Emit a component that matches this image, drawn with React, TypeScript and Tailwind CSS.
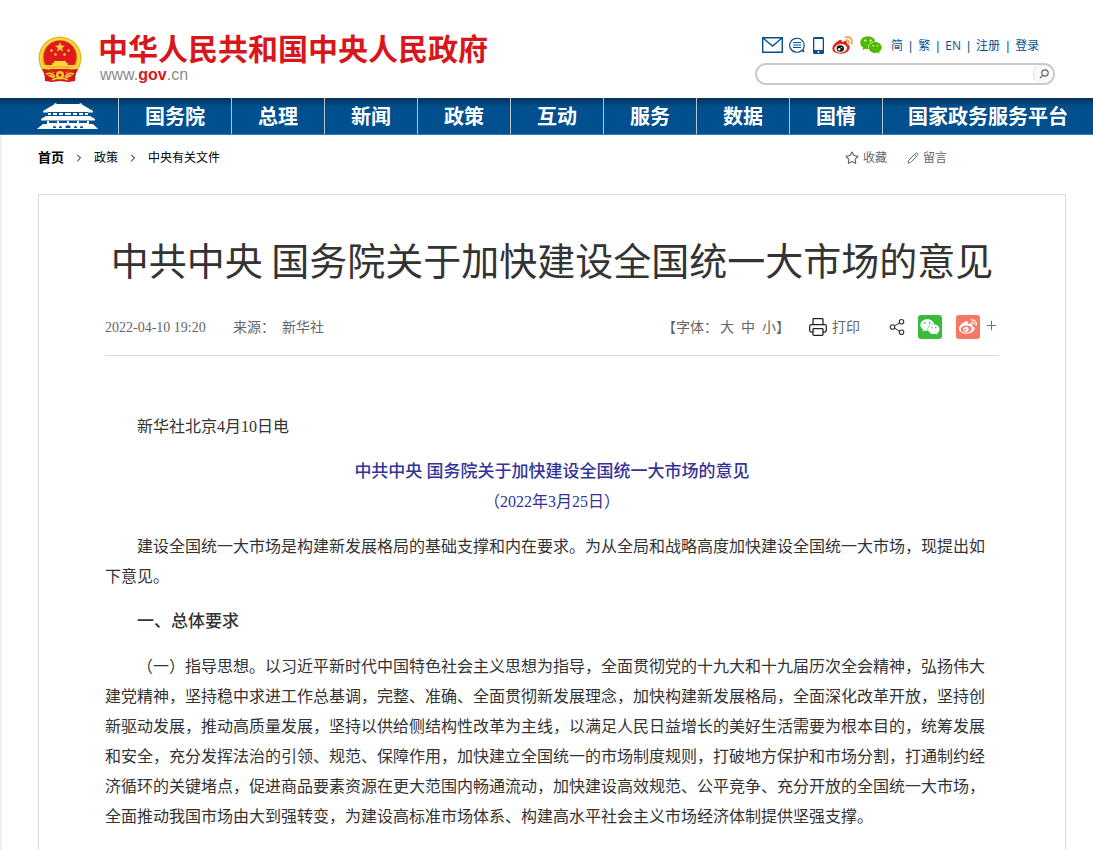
import { ChevronRight, Pencil, Plus, Printer, Share2, Star } from "lucide-react";
import { FaWeibo, FaWeixin } from "react-icons/fa";

const navItems = ["国务院", "总理", "新闻", "政策", "互动", "服务", "数据", "国情"];

const topLinks = ["简", "繁", "EN", "注册", "登录"];

function Emblem() {
  return (
    <svg viewBox="0 0 44 47" className="h-[47px] w-11" aria-hidden="true">
      <path d="M6 32L7 45L14 46L22 45L30 46L37 45L38 32Z" fill="#d3161c" />
      <circle cx="22" cy="22" r="21.5" fill="#e9b51f" />
      <circle cx="22" cy="22" r="19" fill="none" stroke="#f8d94a" strokeWidth="2" />
      <circle cx="22" cy="21" r="16.5" fill="#e0191c" />
      <path
        d="M22 6L23.3 9.6L27 9.7L24 12L25.1 15.6L22 13.5L18.9 15.6L20 12L17 9.7L20.7 9.6Z"
        fill="#fbd43a"
      />
      <g fill="#fbd43a">
        <circle cx="13.5" cy="14.5" r="1.2" />
        <circle cx="30.5" cy="14.5" r="1.2" />
        <circle cx="17.5" cy="18.5" r="1.2" />
        <circle cx="26.5" cy="18.5" r="1.2" />
        <path d="M16 25H28V27H30V29H37V33H7V29H14V27H16Z" />
      </g>
      <path d="M9 31H35" stroke="#e0a51a" strokeWidth="1" />
      <path d="M4 33Q13 33 15 37Q22 34 29 37Q31 33 40 33L37 40Q30 37 27 42H17Q14 37 7 40Z" fill="#d3161c" />
      <circle cx="22" cy="39" r="4" fill="#f4c930" />
      <circle cx="22" cy="39" r="1.6" fill="#d3161c" />
      <path
        d="M8 38Q14 36 17 41M36 38Q30 36 27 41M14 44Q22 40 30 44"
        fill="none"
        stroke="#f4c930"
        strokeWidth="1.6"
      />
    </svg>
  );
}

function GateIcon() {
  return (
    <svg viewBox="0 0 62 27" className="h-[27px] w-[62px]" aria-hidden="true">
      <g fill="#fff">
        <path d="M17 1.5L18 0L20 1H42L44 0L45 1.5L56 8V9.5H6V8Z" />
        <path d="M11 10H51V12H11Z" />
        <path d="M9 13H53L58 16V17.5H4V16Z" />
        <path d="M10 18H52V22H10Z" />
        <path d="M6 21H56L61 26H0Z" />
      </g>
      <g fill="#0a5191">
        <path d="M11 9H51V10H11Z" />
        <path d="M14 10H16V12H14ZM20 10H22V12H20ZM26 10H28V12H26ZM34 10H36V12H34ZM40 10H42V12H40ZM46 10H48V12H46Z" />
        <path d="M12 18H20V20H12ZM22 18H30V20H22ZM32 18H40V20H32ZM42 18H50V20H42Z" />
        <path d="M16 25V24Q17.5 22 19 24V25ZM22 25V24Q23.5 22 25 24V25ZM28.5 25V23.500Q31 21 33.500 23.500V25ZM37 25V24Q38.500 22 40 24V25ZM43 25V24Q44.500 22 46 24V25Z" />
      </g>
    </svg>
  );
}

function MailIcon() {
  return (
    <svg viewBox="0 0 21 16" className="h-4 w-[21px]" fill="none" stroke="#05508f" strokeWidth="1.4">
      <path d="M0.700 0.700H20.300V15.300H0.700ZM1 1L10.500 9L20 1" />
    </svg>
  );
}

function ChatIcon() {
  return (
    <svg viewBox="0 0 16 16" className="h-4 w-4" fill="none" stroke="#05508f" strokeWidth="1.2">
      <path d="M13 13.200A7.200 7 0 1 1 15 9.500Q14.800 11.500 14 12.500L15 15Z" />
      <path d="M4 5.500H12M4 8H12M4 10.500H12" />
    </svg>
  );
}

function PhoneIcon() {
  return (
    <svg viewBox="0 0 11 17" className="h-[17px] w-[11px]">
      <rect x="0" y="0" width="11" height="17" rx="1.500" fill="#05508f" />
      <rect x="1.300" y="2" width="8.400" height="11" fill="#fff" />
      <circle cx="5.500" cy="15" r="1" fill="#fff" />
    </svg>
  );
}

function WeiboIcon() {
  return (
    <svg viewBox="0 0 21 18" className="h-[18px] w-[21px]">
      <path
        d="M7.500 4Q10 3 10 6Q13.500 4.300 14.800 5.700Q15.500 6.700 15 8Q18 9 17.700 11.500Q17 17.500 9 17.800Q0.500 17.500 0.300 12.500Q0.500 8 7.500 4Z"
        fill="#e1251b"
      />
      <ellipse cx="8.700" cy="12.300" rx="6.300" ry="4.300" fill="#fff" transform="rotate(-8 8.700 12.300)" />
      <ellipse cx="8.300" cy="12.500" rx="3.600" ry="3.200" fill="#111" />
      <circle cx="7.200" cy="13.300" r="1.200" fill="#fff" />
      <circle cx="9.500" cy="11.700" r="0.600" fill="#fff" />
      <path
        d="M13.500 1.200Q18 0 19.700 3.700Q20.300 5.700 19.500 7.700M14 4.200Q16.300 3.800 17 5.500Q17.200 6.300 16.800 7.200"
        fill="none"
        stroke="#f39a2b"
        strokeWidth="1.500"
        strokeLinecap="round"
      />
    </svg>
  );
}

function Header() {
  return (
    <header className="flex h-[98px] items-start justify-between px-[38px]">
      <a href="#" className="flex gap-4 pt-9">
        <Emblem />
        <div className="-mt-1">
          <div className="text-[30px] leading-[34px] font-bold whitespace-nowrap text-[#d7171b]">
            中华人民共和国中央人民政府
          </div>
          <div className="pl-0.5 font-['Liberation_Sans',sans-serif] text-base leading-[18px] text-[#8c8c8c]">
            www.<span className="font-bold text-[#d7171b]">gov</span>.cn
          </div>
        </div>
      </a>

      <div className="w-[300px] pt-[34px]">
        <div className="flex items-center gap-2 pl-[7px]">
          <a href="#" aria-label="邮箱"><MailIcon /></a>
          <a href="#" aria-label="留言" className="-ml-0.5"><ChatIcon /></a>
          <a href="#" aria-label="客户端"><PhoneIcon /></a>
          <a href="#" aria-label="微博"><WeiboIcon /></a>
          <a href="#" aria-label="微信" className="-ml-0.5"><FaWeixin className="h-5 w-6 text-[#51b800]" /></a>
          <div className="flex gap-1.5 pt-0.5 text-xs leading-5 whitespace-nowrap text-[#05508f]">
            {topLinks.map((link, i) => (
              <span key={link} className="flex gap-1.5">
                {i > 0 && <span className="font-['Liberation_Sans',sans-serif]">|</span>}
                <a href="#">{link}</a>
              </span>
            ))}
          </div>
        </div>
        <form className="mt-[7px] flex h-[22px] items-center rounded-full border-2 border-[#c9c9c9]">
          <input type="text" aria-label="搜索" className="h-full min-w-0 flex-1 bg-transparent pl-3 text-xs outline-none" />
          <button
            type="button"
            aria-label="搜索"
            className="flex h-[18px] w-5 items-center justify-center rounded-full border-l border-[#dedede] bg-[#fafafa]"
          >
            <svg viewBox="0 0 10 10" className="h-2.5 w-2.5" fill="none" stroke="#666" strokeWidth="1.2">
              <circle cx="6" cy="4" r="3.200" />
              <path d="M3.700 6.300L1 9" />
            </svg>
          </button>
        </form>
      </div>
    </header>
  );
}

function NavBar() {
  return (
    <nav className="flex h-[37px] border-b border-[#3d7aae] bg-[linear-gradient(#07315a,#00508f_9px)] text-xl leading-[38px] font-bold whitespace-nowrap text-white">
      <a href="#" aria-label="首页" className="flex w-[118px] items-center pl-[37px]">
        <GateIcon />
      </a>
      {navItems.map((item) => (
        <a key={item} href="#" className="border-l border-[#b9c4cf] px-[26px]">
          {item}
        </a>
      ))}
      <a href="#" className="flex-1 border-l border-[#b9c4cf] pl-[25px]">
        国家政务服务平台
      </a>
    </nav>
  );
}

function Breadcrumb() {
  return (
    <div className="flex h-[22px] items-center justify-between pr-[119px] text-xs text-black">
      <div className="flex items-center gap-[9px]">
        <a href="#" className="text-[13px] font-bold">首页</a>
        <ChevronRight className="h-3 w-3" strokeWidth={2} />
        <a href="#">政策</a>
        <ChevronRight className="h-3 w-3" strokeWidth={2} />
        <a href="#">中央有关文件</a>
      </div>
      <div className="flex gap-5 text-[#666]">
        <button type="button" className="flex items-center gap-1">
          <Star className="h-3.5 w-3.5" strokeWidth={2} />
          收藏
        </button>
        <button type="button" className="flex items-center gap-1">
          <Pencil className="h-3 w-3" strokeWidth={2} />
          留言
        </button>
      </div>
    </div>
  );
}

function ArticleMeta() {
  return (
    <div className="flex items-center justify-between border-b border-[#d9d9d9] pt-3 pb-4 text-sm text-[#666]">
      <div className="flex pt-0.5 font-['Liberation_Serif','Noto_Sans_CJK_SC',serif]">
        <span className="w-32">2022-04-10 19:20</span>
        <span className="w-[49px]">来源：</span>
        <span>新华社</span>
      </div>
      <div className="flex items-center whitespace-nowrap">
        <div className="mr-[18px] flex">
          <span className="mr-0.5">【字体：</span>
          <button type="button" className="mr-[7px]">大</button>
          <button type="button" className="mr-[7px]">中</button>
          <button type="button">小</button>
          <span>】</span>
        </div>
        <button type="button" className="mr-7 flex items-center gap-1">
          <Printer className="h-5 w-5 text-[#222]" strokeWidth={1.5} />
          打印
        </button>
        <button type="button" aria-label="分享" className="mr-3">
          <Share2 className="h-[18px] w-[18px] text-[#333]" strokeWidth={1.5} />
        </button>
        <button
          type="button"
          aria-label="分享到微信"
          className="mr-3.5 flex h-6 w-6 items-center justify-center rounded-[3px] bg-[#3aba3e] text-white"
        >
          <FaWeixin className="h-[18px] w-5" />
        </button>
        <button
          type="button"
          aria-label="分享到微博"
          className="mr-1 flex h-6 w-6 items-center justify-center rounded-[3px] bg-[#f67766] text-white"
        >
          <FaWeibo className="h-[18px] w-[18px]" />
        </button>
        <button type="button" aria-label="更多" className="pb-1">
          <Plus className="h-[15px] w-[15px]" strokeWidth={1.5} />
        </button>
      </div>
    </div>
  );
}

export default function App() {
  return (
    <div className="flex min-h-screen flex-col bg-white font-['Open_Sans','Noto_Sans_CJK_SC',sans-serif]">
      <Header />
      <NavBar />
      <main className="flex flex-1 flex-col border-l-2 border-[#f0f0f0] pt-3 pr-[27px] pl-9">
        <Breadcrumb />
        <article className="mt-[25px] flex-1 border border-b-0 border-[#dcdcdc] px-[66px] pt-[39px] pb-4">
          <h1 className="text-center font-['Noto_Sans_CJK_SC',sans-serif] text-[38px] leading-[50px] whitespace-nowrap text-[#333]">
            中共中央 国务院关于加快建设全国统一大市场的意见
          </h1>
          <div className="mt-[19px]">
            <ArticleMeta />
          </div>
          <div className="flex flex-col gap-[15px] pt-14 font-['Liberation_Serif','Noto_Sans_CJK_SC',serif] text-base leading-[30px] text-[#333]">
            <p className="indent-8">新华社北京4月10日电</p>
            <div className="text-center text-[#333399]">
              <h2 className="text-[17px] font-medium">
                中共中央 国务院关于加快建设全国统一大市场的意见
              </h2>
              <p>（2022年3月25日）</p>
            </div>
            <p className="indent-8">
              建设全国统一大市场是构建新发展格局的基础支撑和内在要求。为从全局和战略高度加快建设全国统一大市场，现提出如下意见。
            </p>
            <h3 className="indent-8 text-[17px] font-medium">一、总体要求</h3>
            <p className="indent-8">
              （一）指导思想。以习近平新时代中国特色社会主义思想为指导，全面贯彻党的十九大和十九届历次全会精神，弘扬伟大建党精神，坚持稳中求进工作总基调，完整、准确、全面贯彻新发展理念，加快构建新发展格局，全面深化改革开放，坚持创新驱动发展，推动高质量发展，坚持以供给侧结构性改革为主线，以满足人民日益增长的美好生活需要为根本目的，统筹发展和安全，充分发挥法治的引领、规范、保障作用，加快建立全国统一的市场制度规则，打破地方保护和市场分割，打通制约经济循环的关键堵点，促进商品要素资源在更大范围内畅通流动，加快建设高效规范、公平竞争、充分开放的全国统一大市场，全面推动我国市场由大到强转变，为建设高标准市场体系、构建高水平社会主义市场经济体制提供坚强支撑。
            </p>
          </div>
        </article>
      </main>
    </div>
  );
}
